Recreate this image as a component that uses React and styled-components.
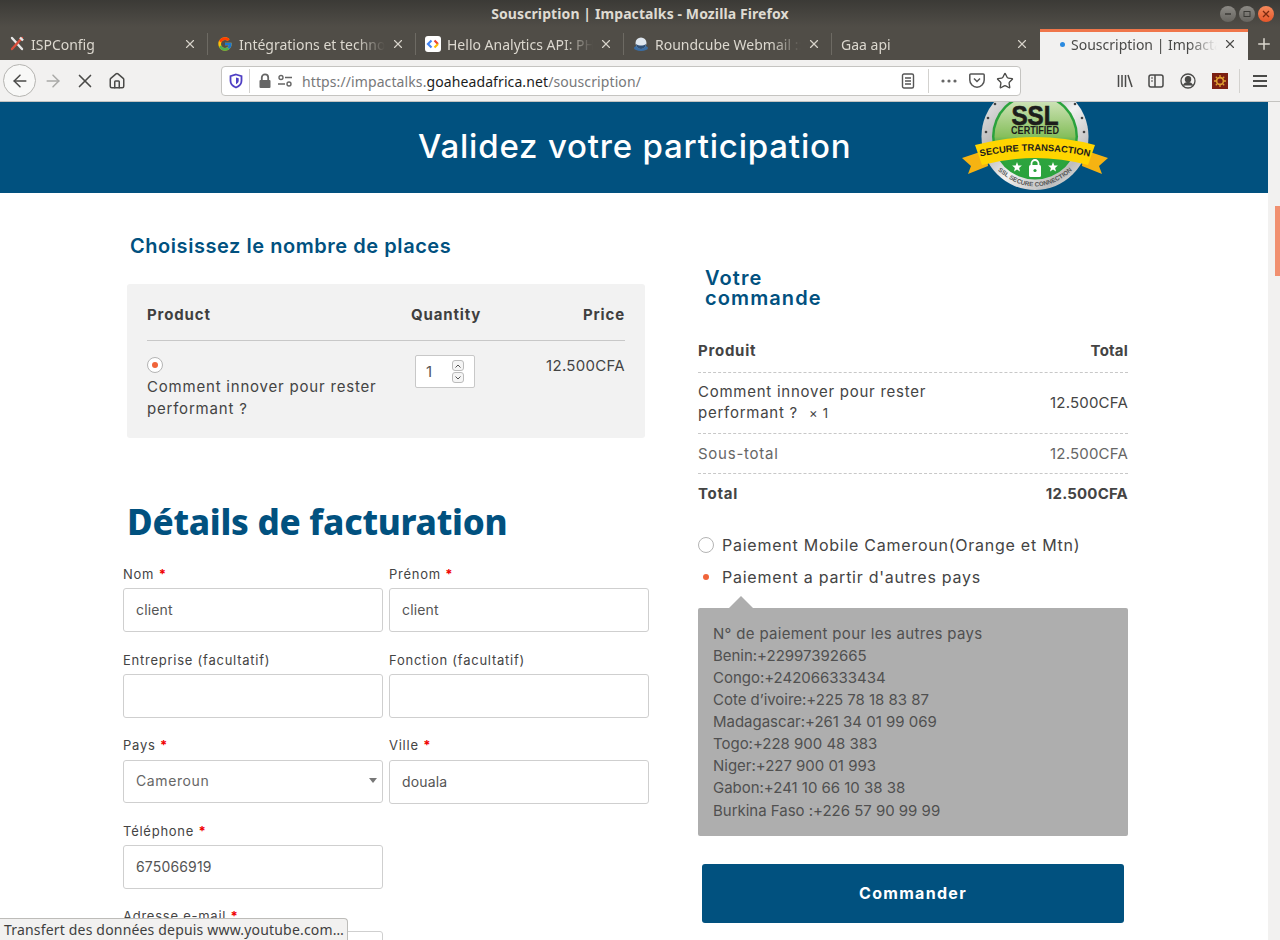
import React from "react";
import styled, { createGlobalStyle } from "styled-components";
import { FcGoogle } from "react-icons/fc";
import { ArrowLeft, ArrowRight, X, Home, Plus, Star } from "lucide-react";

const GlobalStyle = createGlobalStyle`
  html, body {
    margin: 0;
    padding: 0;
    height: 940px;
    overflow: hidden;
    background: #ffffff;
  }
  * { box-sizing: border-box; }
`

const BLUE = "#01517f";
const UI_FONT = `"Noto Sans", "Open Sans", sans-serif`;
const SITE_FONT = `Inter, "Noto Sans", sans-serif`;

const Screen = styled.div`
  position: relative;
  width: 1280px;
  height: 940px;
  display: flex;
  flex-direction: column;
  overflow: hidden;
`

/* window chrome */
const TitleBar = styled.div`
  height: 60px;
  flex: none;
  background: linear-gradient(#3b3a36, #504d47 45%, #504d47);
  display: flex;
  flex-direction: column;
`

const TitleRow = styled.div`
  height: 28px;
  padding-bottom: 2px;
  display: flex;
  align-items: center;
  justify-content: center;
  position: relative;
  font: 700 14px ${UI_FONT};
  letter-spacing: 0.1px;
  color: #dfdbd2;
`

const WindowButtons = styled.div`
  position: absolute;
  right: 6px;
  top: 6px;
  display: flex;
  gap: 3px;
`

const WindowButton = styled.div`
  width: 16px;
  height: 16px;
  border-radius: 50%;
  display: flex;
  align-items: center;
  justify-content: center;
  background: ${(p) => (p.$close ? "linear-gradient(#f58a5c, #e5562a)" : "linear-gradient(#8c8a85, #66645f)")};
  color: ${(p) => (p.$close ? "#7a2a10" : "#3b3a36")};
`

const TabStrip = styled.div`
  height: 32px;
  display: flex;
  align-items: stretch;
`

const Tab = styled.div`
  width: 208px;
  flex: none;
  display: flex;
  align-items: center;
  padding: ${(p) => (p.$active ? "0 8px 4px 20px" : "0 8px 0 9px")};
  gap: 6px;
  font: 14px ${UI_FONT};
  position: relative;
  color: ${(p) => (p.$active ? "#4a4a48" : "#dcd8cf")};
  background: ${(p) => (p.$active ? "#f2f1f0" : "transparent")};
  border-top: ${(p) => (p.$active ? "3px solid #f0764a" : "none")};
  margin-top: ${(p) => (p.$active ? "1px" : "0")};
  &::after {
    content: "";
    display: ${(p) => (p.$divider ? "block" : "none")};
    position: absolute;
    right: 0;
    top: 5px;
    bottom: 5px;
    width: 1px;
    background: #6d6a63;
  }
`

const TabLabel = styled.span`
  flex: 1;
  overflow: hidden;
  white-space: nowrap;
  -webkit-mask-image: linear-gradient(90deg, #000 80%, transparent 100%);
  mask-image: linear-gradient(90deg, #000 80%, transparent 100%);
`

const TabClose = styled(X)`
  flex: none;
  width: 14px;
  height: 14px;
  margin-right: 3px;
  color: ${(p) => (p.$active ? "#4a4a48" : "#d6d2c9")};
`

const NewTab = styled(Plus)`
  width: 18px;
  height: 18px;
  margin: 7px 0 0 7px;
  color: #dcd8cf;
`

const Dot = styled.span`
  width: 5px;
  height: 5px;
  border-radius: 50%;
  background: #2a8ae0;
  flex: none;
`

const NavBar = styled.div`
  height: 42px;
  flex: none;
  background: #f2f1f0;
  border-bottom: 1px solid #c4c3c0;
  display: flex;
  align-items: center;
  color: #4a4a48;
  position: relative;
`

const BackButton = styled.div`
  width: 33px;
  height: 33px;
  flex: none;
  margin-left: 3px;
  border-radius: 50%;
  border: 1px solid #b5b4b1;
  background: #f8f8f7;
  display: flex;
  align-items: center;
  justify-content: center;
`

const NavIcon = styled.div`
  width: ${(p) => p.$w || 32}px;
  margin-left: ${(p) => p.$before || 0}px;
  flex: none;
  display: flex;
  align-items: center;
  justify-content: center;
  color: ${(p) => p.$color || "#4a4a48"};
  svg { flex: none; }
`

const UrlBar = styled.div`
  width: 800px;
  height: 30px;
  margin-left: 87px;
  flex: none;
  background: #fff;
  border: 1px solid #c5c4c1;
  border-radius: 4px;
  display: flex;
  align-items: center;
  font: 14px ${UI_FONT};
  letter-spacing: 0.1px;
  color: #77787a;
`

const BarSep = styled.div`
  width: 1px;
  height: 24px;
  margin-left: ${(p) => p.$before || 0}px;
  background: #d3d2cf;
  flex: none;
`

const UrlText = styled.div`
  flex: 1;
  margin-left: 12px;
  padding-top: 2px;
  white-space: nowrap;
  b { font-weight: 400; color: #1c1c1c; }
`

/* page */
const Viewport = styled.div`
  flex: 1;
  display: flex;
  min-height: 0;
`

const Page = styled.div`
  flex: 1;
  overflow: hidden;
  background: #fff;
  font-family: ${SITE_FONT};
  color: #444;
`

const Scrollbar = styled.div`
  width: 12px;
  flex: none;
  background: #f2f1f0;
  padding: 104px 0 0 7px;
`

const ScrollThumb = styled.div`
  width: 5px;
  height: 70px;
  background: #f19070;
`

const Banner = styled.div`
  height: 91px;
  background: ${BLUE};
  display: flex;
  align-items: center;
  padding-left: 418px;
  overflow: hidden;
  position: relative;
`

const BannerTitle = styled.h1`
  margin: 0 0 2px;
  width: 543px;
  flex: none;
  font: 500 33px/1 ${SITE_FONT};
  letter-spacing: 0.8px;
  color: #fff;
  white-space: nowrap;
`

const BadgeSvg = styled.svg`
  flex: none;
  width: 148px;
  height: 111px;
  align-self: flex-end;
  margin-bottom: 0;
`

const Columns = styled.div`
  display: flex;
  padding: 40px 0 0 123px;
`

const LeftColumn = styled.div`
  width: 526px;
  flex: none;
`

const RightColumn = styled.div`
  width: 430px;
  flex: none;
  margin: 35px 0 0 49px;
`

const SectionTitle = styled.h2`
  margin: 0 0 25px 7px;
  font: 600 20px/26px ${SITE_FONT};
  color: ${BLUE};
  letter-spacing: 0.55px;
`

const ProductCard = styled.div`
  width: 518px;
  margin-left: 4px;
  height: 154px;
  padding: 0 20px;
  background: #f2f2f2;
  border-radius: 3px;
`

const ProductGrid = styled.div`
  display: grid;
  grid-template-columns: 264px 1fr auto;
  align-items: center;
  height: 57px;
  padding-top: 4px;
  border-bottom: 1px solid #c8c8c8;
  font: 700 15px ${SITE_FONT};
  letter-spacing: 0.85px;
  color: #3f3f3f;
  span:last-child { text-align: right; }
`

const ProductRow = styled.div`
  display: grid;
  grid-template-columns: 268px 1fr auto;
  padding-top: 14px;
`

const ProductName = styled.div`
  font: 15px/22px ${SITE_FONT};
  letter-spacing: 0.8px;
  color: #444;
`

const Radio = styled.span`
  width: 16px;
  height: 16px;
  border-radius: 50%;
  border: 1px solid #b4b4b4;
  background: #fff;
  display: ${(p) => (p.$block ? "flex" : "inline-flex")};
  flex: none;
  align-items: center;
  justify-content: center;
  margin: ${(p) => (p.$block ? "2px 0 3px" : "0")};
  &::after {
    content: "";
    display: ${(p) => (p.$checked ? "block" : "none")};
    width: 6px;
    height: 6px;
    border-radius: 50%;
    background: #f0643a;
  }
`

const QtyBox = styled.div`
  width: 60px;
  height: 33px;
  background: #fff;
  border: 1px solid #c8c8c8;
  border-radius: 2px;
  display: flex;
  align-items: center;
  justify-content: space-between;
  padding: 0 10px 0 10px;
  font: 15px ${SITE_FONT};
  color: #555;
`

const Spinner = styled.div`
  display: flex;
  flex-direction: column;
  gap: 1px;
`

const SpinButton = styled.div`
  width: 12px;
  height: 11px;
  border: 1px solid #bbb;
  border-radius: 3px;
  display: flex;
  align-items: center;
  justify-content: center;
  background: #f5f5f5;
`

const PriceText = styled.div`
  font: 15px/22px ${SITE_FONT};
  letter-spacing: 0.3px;
  color: #444;
  white-space: nowrap;
`

const BillingHeading = styled.h2`
  margin: 59px 0 18px 4px;
  font: 800 35px/50px "Noto Sans", sans-serif;
  letter-spacing: -0.25px;
  color: ${BLUE};
  white-space: nowrap;
`

const FieldGrid = styled.div`
  display: grid;
  grid-template-columns: 260px 260px;
  column-gap: 6px;
  row-gap: 18px;
`

const Field = styled.div`
  margin-top: ${(p) => p.$shift || 0}px;
`

const FieldLabel = styled.label`
  display: block;
  font: 13px/18px ${SITE_FONT};
  letter-spacing: 0.75px;
  color: #444;
  margin-bottom: ${(p) => p.$gap || 5}px;
  em { font-style: normal; font-weight: 700; color: #f00000; letter-spacing: 0; }
`

const TextInput = styled.div`
  height: ${(p) => p.$h || 44}px;
  border: 1px solid #cfcfcf;
  border-radius: 3px;
  padding: 0 12px 2px;
  display: flex;
  align-items: center;
  justify-content: space-between;
  font: 14px ${SITE_FONT};
  letter-spacing: ${(p) => (p.$select ? "0.6px" : "0.15px")};
  color: ${(p) => (p.$select ? "#666" : "#555")};
  background: #fff;
`

const SelectArrow = styled.span`
  width: 0;
  height: 0;
  margin-right: -7px;
  border: 4px solid transparent;
  border-top: 5px solid #777;
  border-bottom: none;
`

const OrderTitle = styled.h2`
  margin: 0 0 22px 7px;
  width: 130px;
  font: 600 20px/20px ${SITE_FONT};
  letter-spacing: 1.1px;
  color: ${BLUE};
`

const OrderRow = styled.div`
  display: flex;
  align-items: center;
  justify-content: space-between;
  height: ${(p) => p.$h}px;
  padding-bottom: ${(p) => p.$lift || 2}px;
  border-bottom: ${(p) => (p.$last ? "none" : "1px dashed #c8c8c8")};
  font: ${(p) => (p.$bold ? 700 : 400)} 15px/21px ${SITE_FONT};
  letter-spacing: 0.75px;
  color: ${(p) => (p.$muted ? "#666" : "#444")};
  small { font-size: 13px; margin-left: 6px; }
`

const Amount = styled.span`
  letter-spacing: 0.2px;
`

const PayOption = styled.div`
  height: 32px;
  display: flex;
  align-items: center;
  gap: 8px;
  font: 16px ${SITE_FONT};
  letter-spacing: 0.75px;
  color: #444;
`

const PayOptions = styled.div`
  margin-top: 15px;
`

const BulletSlot = styled.span`
  width: 16px;
  flex: none;
  display: flex;
  justify-content: center;
  &::after {
    content: "";
    width: 6px;
    height: 6px;
    border-radius: 50%;
    background: #f0643a;
  }
`

const InfoBox = styled.div`
  position: relative;
  margin-top: 15px;
  height: 228px;
  padding: 15px;
  background: #aeaeae;
  border-radius: 2px;
  font: 15px/22px ${SITE_FONT};
  letter-spacing: -0.02px;
  color: #505050;
  &::before {
    content: "";
    position: absolute;
    left: 31px;
    top: -12px;
    border: 12px solid transparent;
    border-top: none;
    border-bottom-color: #aeaeae;
  }
  div:first-child { letter-spacing: 0.32px; }
  div:last-child { margin-top: 1px; }
`

const OrderButton = styled.button`
  display: block;
  width: 422px;
  height: 59px;
  margin: 28px 0 0 4px;
  padding: 0 0 2px;
  border: none;
  border-radius: 3px;
  background: ${BLUE};
  color: #fff;
  font: 700 16px ${SITE_FONT};
  letter-spacing: 1.3px;
`

const StatusTip = styled.div`
  position: absolute;
  left: 0;
  bottom: 0;
  width: 348px;
  height: 22px;
  padding: 0 0 0 4px;
  background: #f2f1f0;
  border: 1px solid #bdbcb9;
  border-left: none;
  border-bottom: none;
  border-top-right-radius: 4px;
  font: 14px/21px ${UI_FONT};
  letter-spacing: 0.18px;
  color: #3f3f3f;
  white-space: nowrap;
`

const ToolsFavicon = () => (
  <svg width="16" height="16" viewBox="0 0 16 16" fill="none">
    <path d="M3 2l10 11" stroke="#e8e8e8" strokeWidth="2.4" strokeLinecap="round" />
    <path d="M13 2L3 13" stroke="#d94f3d" strokeWidth="2.4" strokeLinecap="round" />
    <path d="M11 1.5l3 3" stroke="#e8e8e8" strokeWidth="2.4" />
  </svg>
);

const CodeFavicon = () => (
  <svg width="16" height="16" viewBox="0 0 16 16" fill="none">
    <rect width="16" height="16" rx="3" fill="#fff" />
    <path d="M6.5 4.5L3 8l3.5 3.5" stroke="#4285f4" strokeWidth="2.2" />
    <path d="M9.500 4.500L13 8" stroke="#ea4335" strokeWidth="2.2" />
    <path d="M13 8l-3.500 3.500" stroke="#fbbc05" strokeWidth="2.2" />
  </svg>
);

const GlobeFavicon = () => (
  <svg width="16" height="16" viewBox="0 0 16 16">
    <ellipse cx="8" cy="12" rx="7" ry="3" fill="#3a6ea5" />
    <circle cx="8" cy="7" r="5.5" fill="#dfe7ef" />
    <path d="M3 8a5 5 0 0 0 10 0c-3 2-7 2-10 0z" fill="#2f4f74" />
  </svg>
);

const ShieldIcon = () => (
  <svg width="16" height="16" viewBox="0 0 16 16" fill="none">
    <path d="M8 1.5l5.5 1.6v4.6c0 3.3-2.4 5.6-5.5 6.8-3.1-1.2-5.5-3.5-5.5-6.8V3.1z" stroke="#4f3fc4" strokeWidth="1.8" />
    <path d="M8 4.5l2.7.8v2.5c0 1.6-1.2 2.7-2.7 3.4z" fill="#4f3fc4" />
  </svg>
);

const LockIcon = () => (
  <svg width="14" height="16" viewBox="0 0 14 16" fill="none">
    <rect x="1.5" y="7" width="11" height="8" rx="1" fill="#666" />
    <path d="M3.8 7V4.6a3.2 3.2 0 0 1 6.4 0V7" stroke="#666" strokeWidth="1.8" />
  </svg>
);

const PermIcon = () => (
  <svg width="16" height="14" viewBox="0 0 16 14" fill="none" stroke="#666" strokeWidth="1.4">
    <circle cx="4" cy="3.5" r="2" />
    <path d="M8 3.500h7M1 10h7" />
    <circle cx="12" cy="10" r="2" />
  </svg>
);

const ReaderIcon = () => (
  <svg width="14" height="16" viewBox="0 0 14 16" fill="none" stroke="#555" strokeWidth="1.4">
    <rect x="1.5" y="1" width="11" height="14" rx="1.5" />
    <path d="M4 5h6M4 8h6M4 11h6" />
  </svg>
);

const DotsIcon = () => (
  <svg width="16" height="4" viewBox="0 0 16 4" fill="#666">
    <circle cx="2" cy="2" r="1.6" />
    <circle cx="8" cy="2" r="1.6" />
    <circle cx="14" cy="2" r="1.6" />
  </svg>
);

const PocketIcon = () => (
  <svg width="16" height="15" viewBox="0 0 16 15" fill="none" stroke="#555" strokeWidth="1.5">
    <path d="M1.8 1h12.4a1 1 0 0 1 1 1v5a7.2 7.2 0 0 1-14.4 0V2a1 1 0 0 1 1-1z" />
    <path d="M5 5.5l3 3 3-3" />
  </svg>
);

const LibraryIcon = () => (
  <svg width="16" height="14" viewBox="0 0 16 14" stroke="#4a4a48" strokeWidth="1.5" fill="none">
    <path d="M1.5 1v12M5 1v12M8.5 1v12M11 1l4 12" />
  </svg>
);

const SidebarIcon = () => (
  <svg width="16" height="14" viewBox="0 0 16 14" fill="none" stroke="#4a4a48" strokeWidth="1.5">
    <rect x="1" y="1" width="14" height="12" rx="2" />
    <path d="M7 1v12" />
    <path d="M3 4h2M3 7h2" strokeWidth="1.2" />
  </svg>
);

const AccountIcon = () => (
  <svg width="16" height="16" viewBox="0 0 16 16" fill="none" stroke="#4a4a48" strokeWidth="1.3">
    <circle cx="8" cy="8" r="7" />
    <circle cx="8" cy="6.2" r="2.6" fill="#4a4a48" />
    <path d="M3.4 12.6c1-2.2 2.6-3 4.6-3s3.6.8 4.6 3" fill="#4a4a48" />
  </svg>
);

const ExtensionIcon = () => (
  <svg width="16" height="16" viewBox="0 0 16 16">
    <rect width="16" height="16" fill="#7c1f12" />
    <circle cx="8" cy="8" r="3.4" fill="none" stroke="#e0a030" strokeWidth="1.6" />
    <path d="M8 2v2.5M8 11.5V14M2 8h2.5M11.5 8H14M3.8 3.8l1.8 1.8M10.4 10.4l1.8 1.8M12.2 3.8l-1.8 1.8M5.6 10.4l-1.8 1.8" stroke="#e0a030" strokeWidth="1.3" />
  </svg>
);

const HamburgerIcon = () => (
  <svg width="14" height="14" viewBox="0 0 14 14" stroke="#4a4a48" strokeWidth="1.8">
    <path d="M0 2h14M0 7h14M0 12h14" />
  </svg>
);

const StarShape = ({ x, y }) => (
  <path
    transform={`translate(${x} ${y})`}
    d="M0-5l1.3 3.4 3.6.2-2.8 2.3.9 3.5L0 2.5l-3 1.9.9-3.5-2.8-2.3 3.6-.2z"
    fill="#fff"
  />
);

const RING_DOTS = [[27, 36], [25, 50], [34, 22], [121, 36], [123, 50], [114, 22]];

const SslBadge = () => (
  <BadgeSvg viewBox="0 0 148 111">
    <defs>
      <linearGradient id="ring" x1="0" y1="0" x2="1" y2="1">
        <stop offset="0" stopColor="#f7f7f7" />
        <stop offset="0.35" stopColor="#b4b4b4" />
        <stop offset="0.55" stopColor="#f2f2f2" />
        <stop offset="0.8" stopColor="#bdbdbd" />
        <stop offset="1" stopColor="#f4f4f4" />
      </linearGradient>
      <linearGradient id="disc" x1="0" y1="0" x2="0" y2="1">
        <stop offset="0" stopColor="#d8e8c4" />
        <stop offset="0.5" stopColor="#86bf5c" />
        <stop offset="0.62" stopColor="#2fa740" />
        <stop offset="1" stopColor="#2aa23c" />
      </linearGradient>
      <path id="band" d="M20 74.5 Q74 63 128 74.5" />
      <path id="lower" d="M33 85 Q74 124 115 85" />
    </defs>
    <circle cx="74" cy="54.5" r="53.5" fill="url(#ring)" />
    {RING_DOTS.map(([x, y]) => <circle key={x + "-" + y} cx={x} cy={y} r="1.3" fill="#444" />)}
    <circle cx="74" cy="54.5" r="43" fill="#2aa23c" />
    <circle cx="74" cy="54.5" r="40.5" fill="url(#disc)" />
    <text x="74" y="43" textAnchor="middle" textLength="47" lengthAdjust="spacingAndGlyphs" fontFamily="Liberation Sans, sans-serif" fontWeight="700" fontSize="28" fill="#1d1d1b" stroke="#1d1d1b" strokeWidth="0.7">SSL</text>
    <text x="74" y="52" textAnchor="middle" textLength="48" lengthAdjust="spacingAndGlyphs" fontFamily="Liberation Sans, sans-serif" fontWeight="700" fontSize="10" fill="#1d1d1b">CERTIFIED</text>
    <path d="M1 76l24-8 2 16-20 8 3-8z" fill="#f6b312" />
    <path d="M147 76l-24-8-2 16 20 8-3-8z" fill="#f6b312" />
    <path d="M14 63 Q74 47 134 63 L127 83 Q74 69 21 83 Z" fill="#ffd500" />
    <text fontFamily="Liberation Sans, sans-serif" fontWeight="700" fontSize="9.4" fill="#1d1d1b" textAnchor="middle">
      <textPath href="#band" startOffset="50%">SECURE TRANSACTION</textPath>
    </text>
    <StarShape x={56} y={85} />
    <StarShape x={92} y={85} />
    <rect x="68" y="83" width="12" height="12" rx="1.5" fill="#fff" />
    <path d="M70.5 83v-1.5a3.5 3.5 0 0 1 7 0V83" stroke="#fff" strokeWidth="1.8" fill="none" />
    <circle cx="74" cy="88.5" r="1.6" fill="#2aa23c" />
    <text fontFamily="Liberation Sans, sans-serif" fontWeight="700" fontSize="6.2" fill="#555" textAnchor="middle">
      <textPath href="#lower" startOffset="50%">SSL SECURE CONNECTION</textPath>
    </text>
  </BadgeSvg>
);

const TABS = [
  { label: "ISPConfig", icon: <ToolsFavicon /> },
  { label: "Intégrations et technologies", icon: <FcGoogle size={16} /> },
  { label: "Hello Analytics API: PHP", icon: <CodeFavicon /> },
  { label: "Roundcube Webmail :: Bienvenue", icon: <GlobeFavicon /> },
  { label: "Gaa api" },
];

const PHONES = [
  "N° de paiement pour les autres pays",
  "Benin:+22997392665",
  "Congo:+242066333434",
  "Cote d’ivoire:+225 78 18 83 87",
  "Madagascar:+261 34 01 99 069",
  "Togo:+228 900 48 383",
  "Niger:+227 900 01 993",
  "Gabon:+241 10 66 10 38 38",
  "Burkina Faso :+226 57 90 99 99",
];

const App = () => (
  <Screen>
    <GlobalStyle />
    <TitleBar>
      <TitleRow>
        Souscription | Impactalks - Mozilla Firefox
        <WindowButtons>
          <WindowButton><svg width="8" height="8" stroke="currentColor" strokeWidth="1.5"><path d="M1 4h6" /></svg></WindowButton>
          <WindowButton><svg width="8" height="8" fill="none" stroke="currentColor"><rect x="1" y="1.5" width="6" height="5" /></svg></WindowButton>
          <WindowButton $close><svg width="8" height="8" stroke="currentColor" strokeWidth="1.3"><path d="M1 1l6 6M7 1L1 7" /></svg></WindowButton>
        </WindowButtons>
      </TitleRow>
      <TabStrip>
        {TABS.map((tab, i) => (
          <Tab key={tab.label} $divider={i < 4}>
            {tab.icon}
            <TabLabel>{tab.label}</TabLabel>
            <TabClose />
          </Tab>
        ))}
        <Tab $active>
          <Dot />
          <TabLabel>Souscription | Impactalks</TabLabel>
          <TabClose $active />
        </Tab>
        <NewTab />
      </TabStrip>
    </TitleBar>

    <NavBar>
      <BackButton><ArrowLeft size={20} strokeWidth={1.8} /></BackButton>
      <NavIcon $w={34} $color="#a9a9a7"><ArrowRight size={20} strokeWidth={1.8} /></NavIcon>
      <NavIcon $w={30}><X size={22} strokeWidth={1.8} /></NavIcon>
      <NavIcon $w={34}><Home size={18} strokeWidth={2} /></NavIcon>
      <UrlBar>
        <NavIcon $w={27}><ShieldIcon /></NavIcon>
        <BarSep />
        <NavIcon $w={30}><LockIcon /></NavIcon>
        <NavIcon $w={10}><PermIcon /></NavIcon>
        <UrlText>https://impactalks.<b>goaheadafrica.net</b>/souscription/</UrlText>
        <NavIcon $w={40}><ReaderIcon /></NavIcon>
        <BarSep />
        <NavIcon $w={40}><DotsIcon /></NavIcon>
        <NavIcon $w={16}><PocketIcon /></NavIcon>
        <NavIcon $w={30} $before={5}><Star size={18} strokeWidth={1.8} /></NavIcon>
      </UrlBar>
      <NavIcon $w={32} $before={88}><LibraryIcon /></NavIcon>
      <NavIcon $w={30}><SidebarIcon /></NavIcon>
      <NavIcon $w={34}><AccountIcon /></NavIcon>
      <NavIcon $w={30}><ExtensionIcon /></NavIcon>
      <BarSep $before={4} />
      <NavIcon $w={40}><HamburgerIcon /></NavIcon>
    </NavBar>

    <Viewport>
      <Page>
        <Banner>
          <BannerTitle>Validez votre participation</BannerTitle>
          <SslBadge />
        </Banner>
        <Columns>
          <LeftColumn>
            <SectionTitle>Choisissez le nombre de places</SectionTitle>
            <ProductCard>
              <ProductGrid>
                <span>Product</span>
                <span>Quantity</span>
                <span>Price</span>
              </ProductGrid>
              <ProductRow>
                <ProductName>
                  <Radio $block $checked />
                  Comment innover pour rester performant ?
                </ProductName>
                <QtyBox>
                  1
                  <Spinner>
                    <SpinButton><svg width="6" height="4" fill="none" stroke="#555"><path d="M.5 3.5L3 1l2.5 2.5" /></svg></SpinButton>
                    <SpinButton><svg width="6" height="4" fill="none" stroke="#555"><path d="M.5.5L3 3 5.5.5" /></svg></SpinButton>
                  </Spinner>
                </QtyBox>
                <PriceText>12.500CFA</PriceText>
              </ProductRow>
            </ProductCard>

            <BillingHeading>Détails de facturation</BillingHeading>
            <FieldGrid>
              <Field>
                <FieldLabel>Nom <em>*</em></FieldLabel>
                <TextInput>client</TextInput>
              </Field>
              <Field>
                <FieldLabel>Prénom <em>*</em></FieldLabel>
                <TextInput>client</TextInput>
              </Field>
              <Field $shift={1}>
                <FieldLabel>Entreprise (facultatif)</FieldLabel>
                <TextInput />
              </Field>
              <Field $shift={1}>
                <FieldLabel>Fonction (facultatif)</FieldLabel>
                <TextInput />
              </Field>
              <Field>
                <FieldLabel $gap={6}>Pays <em>*</em></FieldLabel>
                <TextInput $h={43} $select>Cameroun<SelectArrow /></TextInput>
              </Field>
              <Field>
                <FieldLabel $gap={6}>Ville <em>*</em></FieldLabel>
                <TextInput>douala</TextInput>
              </Field>
              <Field>
                <FieldLabel>Téléphone <em>*</em></FieldLabel>
                <TextInput>675066919</TextInput>
              </Field>
              <span />
              <Field>
                <FieldLabel $gap={6}>Adresse e-mail <em>*</em></FieldLabel>
                <TextInput />
              </Field>
            </FieldGrid>
          </LeftColumn>

          <RightColumn>
            <OrderTitle>Votre commande</OrderTitle>
            <OrderRow $h={43} $bold>
              <span>Produit</span>
              <Amount>Total</Amount>
            </OrderRow>
            <OrderRow $h={61}>
              <span>Comment innover pour rester<br />performant ? <small>× 1</small></span>
              <Amount>12.500CFA</Amount>
            </OrderRow>
            <OrderRow $h={40} $muted $lift={1}>
              <span>Sous-total</span>
              <Amount>12.500CFA</Amount>
            </OrderRow>
            <OrderRow $h={40} $bold $last>
              <span>Total</span>
              <Amount>12.500CFA</Amount>
            </OrderRow>
            <PayOptions>
              <PayOption><Radio />Paiement Mobile Cameroun(Orange et Mtn)</PayOption>
              <PayOption><BulletSlot />Paiement a partir d'autres pays</PayOption>
            </PayOptions>
            <InfoBox>
              {PHONES.map((line) => <div key={line}>{line}</div>)}
            </InfoBox>
            <OrderButton>Commander</OrderButton>
          </RightColumn>
        </Columns>
      </Page>
      <Scrollbar><ScrollThumb /></Scrollbar>
    </Viewport>
    <StatusTip>Transfert des données depuis www.youtube.com…</StatusTip>
  </Screen>
);

export default App;
